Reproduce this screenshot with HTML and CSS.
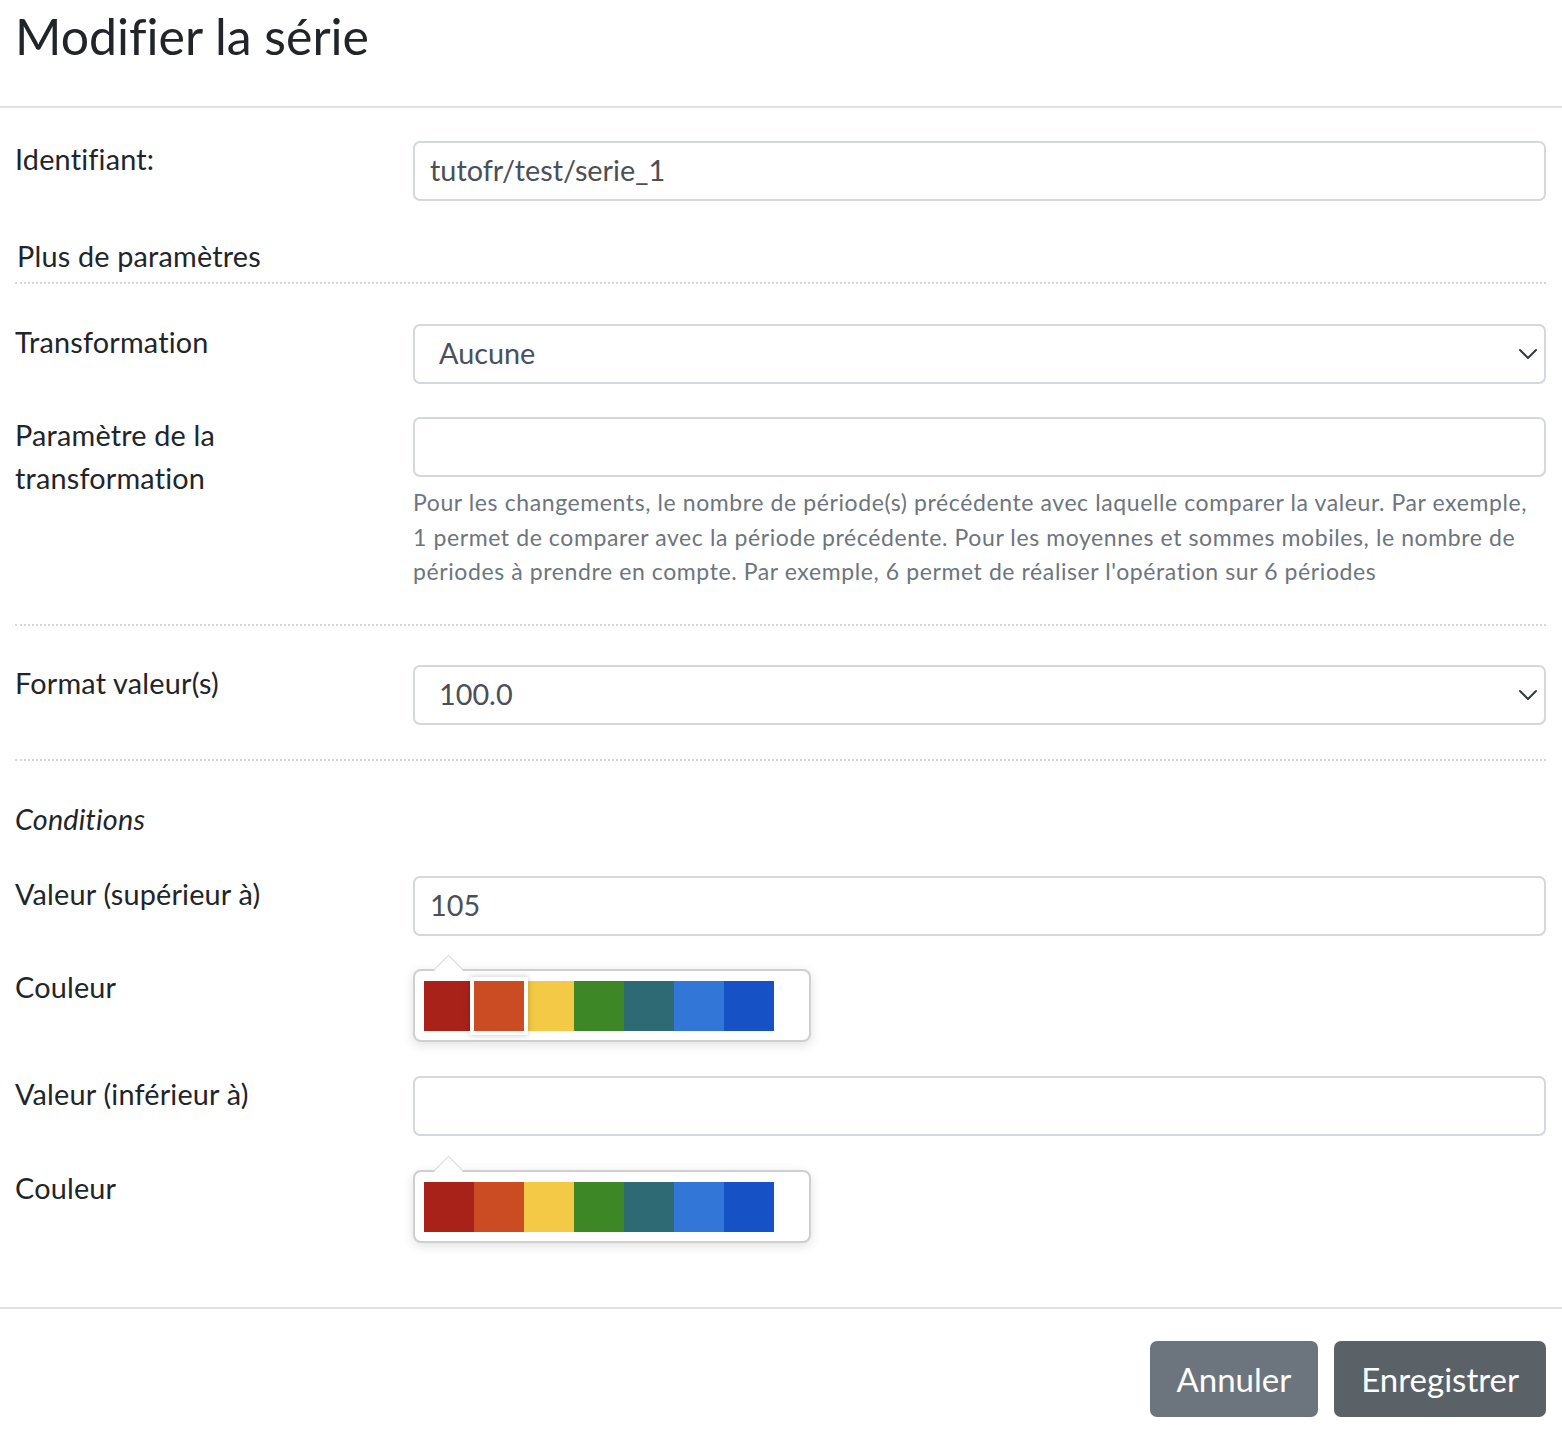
FILE: index.html
```html
<!DOCTYPE html>
<html lang="fr">
<head>
<meta charset="utf-8">
<title>Modifier la série</title>
<link rel="stylesheet" href="styles.css">
</head>
<body>
<div class="modal">
  <div class="modal-header">
    <h3 class="title">Modifier la série</h3>
  </div>
  <div class="modal-body">
    <div class="form-row first">
      <label class="label">Identifiant:</label>
      <div class="control"><input class="form-control" type="text" value="tutofr/test/serie_1"></div>
    </div>

    <div class="section-title">Plus de paramètres</div>

    <div class="form-row">
      <label class="label">Transformation</label>
      <div class="control">
        <div class="select-wrap">
          <select class="form-control form-select"><option>Aucune</option></select>
          <svg class="chevron" width="20" height="12" viewBox="0 0 20 12"><path d="M2 2 L10 10 L18 2" fill="none" stroke="#343a40" stroke-width="2" stroke-linecap="round" stroke-linejoin="round"/></svg>
        </div>
      </div>
    </div>

    <div class="form-row">
      <label class="label">Paramètre de la transformation</label>
      <div class="control">
        <input class="form-control" type="text" value="">
        <div class="help">Pour les changements, le nombre de période(s) précédente avec laquelle comparer la valeur. Par exemple, 1 permet de comparer avec la période précédente. Pour les moyennes et sommes mobiles, le nombre de périodes à prendre en compte. Par exemple, 6 permet de réaliser l'opération sur 6 périodes</div>
      </div>
    </div>

    <div class="sep sep-1"></div>

    <div class="form-row">
      <label class="label">Format valeur(s)</label>
      <div class="control">
        <div class="select-wrap">
          <select class="form-control form-select"><option>100.0</option></select>
          <svg class="chevron" width="20" height="12" viewBox="0 0 20 12"><path d="M2 2 L10 10 L18 2" fill="none" stroke="#343a40" stroke-width="2" stroke-linecap="round" stroke-linejoin="round"/></svg>
        </div>
      </div>
    </div>

    <div class="sep sep-2"></div>

    <div class="conditions">Conditions</div>

    <div class="form-row">
      <label class="label">Valeur (supérieur à)</label>
      <div class="control"><input class="form-control" type="text" value="105"></div>
    </div>

    <div class="form-row">
      <label class="label">Couleur</label>
      <div class="control">
        <div class="picker">
          <span class="arrow"></span>
          <div class="swatches">
            <span class="swatch c1"></span>
            <span class="swatch c2 selected"></span>
            <span class="swatch c3"></span>
            <span class="swatch c4"></span>
            <span class="swatch c5"></span>
            <span class="swatch c6"></span>
            <span class="swatch c7"></span>
          </div>
        </div>
      </div>
    </div>

    <div class="form-row">
      <label class="label">Valeur (inférieur à)</label>
      <div class="control"><input class="form-control" type="text" value=""></div>
    </div>

    <div class="form-row last">
      <label class="label">Couleur</label>
      <div class="control">
        <div class="picker">
          <span class="arrow"></span>
          <div class="swatches">
            <span class="swatch c1"></span>
            <span class="swatch c2"></span>
            <span class="swatch c3"></span>
            <span class="swatch c4"></span>
            <span class="swatch c5"></span>
            <span class="swatch c6"></span>
            <span class="swatch c7"></span>
          </div>
        </div>
      </div>
    </div>
  </div>
  <div class="modal-footer">
    <button class="btn btn-secondary" type="button">Annuler</button>
    <button class="btn btn-dark" type="button">Enregistrer</button>
  </div>
</div>
</body>
</html>
```

FILE: styles.css
```css
html, body {
  margin: 0;
  padding: 0;
  background: #fff;
}

body {
  font-family: Lato, "Open Sans", sans-serif;
  font-variant-ligatures: none;
  color: #212529;
}

.modal-header {
  box-sizing: border-box;
  height: 108px;
  padding: 6px 15px 0;
  border-bottom: 2px solid #dee2e6;
}

.title {
  margin: 0;
  font-size: 50px;
  font-weight: 400;
  line-height: 60px;
}

.modal-body {
  padding: 27px 16px 64px 15px;
}

.form-row {
  display: grid;
  grid-template-columns: 398px 1fr;
  margin-bottom: 27.6px;
}

.form-row.last {
  margin-bottom: 0;
}

.label {
  padding-top: 3px;
  padding-right: 30px;
  font-size: 28.8px;
  line-height: 43.2px;
  letter-spacing: 0.2px;
}

.control {
  padding-top: 6px;
  min-width: 0;
}

.form-control {
  display: block;
  box-sizing: border-box;
  width: 100%;
  height: 60px;
  margin: 0;
  padding: 0 15px 2px;
  border: 2px solid #d4d7db;
  border-radius: 7px;
  background: #fff;
  font-family: inherit;
  font-variant-ligatures: none;
  font-size: 28.8px;
  color: #495057;
  outline: none;
}

.select-wrap {
  position: relative;
}

.form-select {
  -webkit-appearance: none;
  appearance: none;
  padding-left: 24px;
}

.chevron {
  position: absolute;
  right: 8px;
  top: 24px;
  pointer-events: none;
}

.help {
  margin-top: 8px;
  font-size: 23px;
  line-height: 34.5px;
  letter-spacing: 0.6px;
  color: #6c757d;
}

.section-title {
  margin-top: 30.6px;
  margin-bottom: 33.6px;
  padding: 3px 0 4.2px 2px;
  font-size: 28.8px;
  line-height: 43.2px;
  letter-spacing: 0.2px;
  border-bottom: 2px dotted #d6d6d6;
}

.sep {
  border-top: 2px dotted #d6d6d6;
  margin-bottom: 33.6px;
}

.sep-1 {
  margin-top: 34.9px;
}

.sep-2 {
  margin-top: 34px;
}

.conditions {
  padding-top: 3px;
  font-size: 28.8px;
  line-height: 43.2px;
  font-style: italic;
  letter-spacing: 0.2px;
  margin-bottom: 28.8px;
}

.picker {
  position: relative;
  box-sizing: border-box;
  width: 398px;
  height: 73px;
  padding: 10px 9px;
  border: 2px solid #cfcfcf;
  border-radius: 8px;
  background: #fff;
  box-shadow: 0 3px 12px rgba(0, 0, 0, 0.12);
}

.arrow {
  position: absolute;
  top: -12px;
  left: 23px;
  width: 20px;
  height: 20px;
  background: #fff;
  border-left: 1px solid #d6d6d6;
  border-top: 1px solid #d6d6d6;
  transform: rotate(45deg);
}

.swatches {
  position: relative;
  display: flex;
}

.swatch {
  display: block;
  width: 50px;
  height: 50px;
}

.swatch.selected {
  position: relative;
  z-index: 1;
  box-shadow: 0 0 0 4px #fff, 0 0 6px 4px rgba(0, 0, 0, 0.22);
}

.c1 { background: #a9221a; }
.c2 { background: #cb4c22; }
.c3 { background: #f4c945; }
.c4 { background: #3d8727; }
.c5 { background: #2e6a74; }
.c6 { background: #3277d8; }
.c7 { background: #1652c6; }

.modal-footer {
  display: flex;
  justify-content: flex-end;
  gap: 16px;
  padding: 32px 16px 15px;
  border-top: 2px solid #dee2e6;
}

.btn {
  height: 76px;
  padding: 0 27px;
  border: none;
  border-radius: 7px;
  font-family: inherit;
  font-size: 33px;
  color: #fff;
}

.btn-secondary {
  background: #6c757d;
}

.btn-dark {
  background: #5a6268;
}
```
